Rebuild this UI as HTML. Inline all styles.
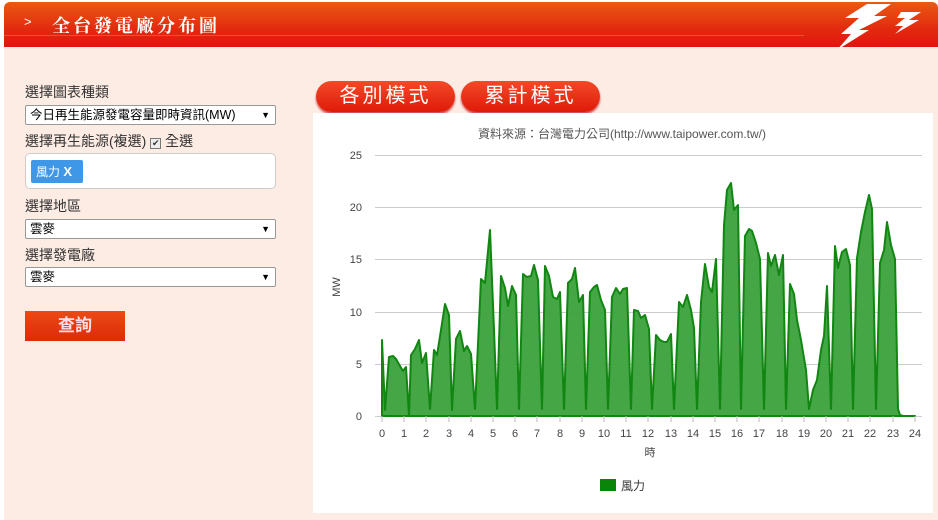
<!DOCTYPE html>
<html><head><meta charset="utf-8"><style>
*{margin:0;padding:0;box-sizing:border-box}
body{width:938px;height:520px;overflow:hidden;background:#fff;font-family:"Liberation Sans","Noto Sans CJK TC",sans-serif;position:relative}
.wrap{position:absolute;left:4px;top:2px;width:934px;height:518px;background:#fdece4;border-radius:6px 6px 0 0;overflow:hidden}
.hdr{position:absolute;left:0;top:0;width:934px;height:45px;background:linear-gradient(#ea5a12,#e32a10 60%,#e0150e);}
.hdr .line{position:absolute;left:0;top:33px;width:800px;height:1px;background:#f07040;opacity:.6}
.hdr .t{position:absolute;left:48px;top:10px;color:#fff;font-size:18px;font-weight:bold;font-family:"Noto Serif CJK SC","Noto Sans CJK TC",serif;letter-spacing:3px}
.hdr .ar{position:absolute;left:20px;top:12px;color:#fff;font-size:13px}
.lab{position:absolute;left:21px;font-size:14px;color:#333}
.sel{position:absolute;left:21px;width:251px;height:20px;background:#fff;border:1px solid #999;border-radius:2px;font-size:12.5px;padding-left:4px;line-height:18px;color:#000}
.sel:after{content:"▼";position:absolute;right:5px;top:0;font-size:9px}
.btn{position:absolute;top:79px;height:31px;border-radius:16px;background:linear-gradient(#f24a28,#e01a08);color:#fff;font-size:20px;letter-spacing:3px;text-align:center;line-height:31px;box-shadow:0 2px 2px #c44}
</style></head><body>
<div class="wrap">
<div class="hdr"><div class="line"></div><span class="ar">&gt;</span><span class="t">全台發電廠分布圖</span>
<svg style="position:absolute;left:825px;top:2px" width="95" height="44"><polygon points="38,0 62,0 45,12 58,12 30,26 40,26 8,46 22,30 12,30 30,14 16,14" fill="#fff"/><polygon points="72,8 92,8 80,16 90,16 66,30 74,22 66,22 76,14 68,14" fill="#fff"/></svg>
</div>
<div class="lab" style="top:80px">選擇圖表種類</div>
<div class="sel" style="top:103px">今日再生能源發電容量即時資訊(MW)</div>
<div class="lab" style="top:129px">選擇再生能源(複選) <span style="display:inline-block;width:11px;height:11px;border:1px solid #777;background:#eee;font-size:9px;line-height:9px;text-align:center;vertical-align:0">✔</span> 全選</div>
<div style="position:absolute;left:21px;top:151px;width:251px;height:36px;background:#fff;border:1px solid #ccc;border-radius:5px"><span style="position:absolute;left:5px;top:6px;height:23px;width:52px;background:#3f97e8;color:#fff;font-size:12px;line-height:24px;padding-left:5px;border-radius:2px">風力 <b style="font-size:13px">X</b></span></div>
<div class="lab" style="top:194px">選擇地區</div>
<div class="sel" style="top:217px">雲麥</div>
<div class="lab" style="top:243px">選擇發電廠</div>
<div class="sel" style="top:265px">雲麥</div>
<div style="position:absolute;left:21px;top:309px;width:100px;height:30px;background:linear-gradient(#ec4a14,#dd2a08);color:#fde;font-size:17px;font-weight:bold;text-align:center;line-height:30px">查詢</div>
<div class="btn" style="left:312px;width:139px">各別模式</div>
<div class="btn" style="left:457px;width:139px">累計模式</div>
<div style="position:absolute;left:309px;top:111px;width:620px;height:400px;background:#fff"></div>
</div>
<svg style="position:absolute;left:0;top:0" width="938" height="520" font-family="Liberation Sans,Noto Sans CJK TC,sans-serif">
<text x="622" y="138" font-size="12" fill="#555" text-anchor="middle">資料來源：台灣電力公司(http://www.taipower.com.tw/)</text>
<g stroke="#ccc" stroke-width="1">
<line x1="375" y1="155.5" x2="922" y2="155.5"/><line x1="375" y1="207.5" x2="922" y2="207.5"/><line x1="375" y1="259.5" x2="922" y2="259.5"/><line x1="375" y1="312.5" x2="922" y2="312.5"/><line x1="375" y1="364.5" x2="922" y2="364.5"/><line x1="375" y1="416.5" x2="922" y2="416.5"/>
</g>
<g font-size="11" fill="#444" text-anchor="end"><text x="362" y="159">25</text><text x="362" y="211">20</text><text x="362" y="263">15</text><text x="362" y="316">10</text><text x="362" y="368">5</text><text x="362" y="420">0</text></g>
<text x="340" y="287" font-size="11" fill="#444" transform="rotate(-90 340 287)" text-anchor="middle">MW</text>
<polygon fill="#3aa13a" fill-opacity=".95" stroke="#128612" stroke-width="2" stroke-linejoin="round" points="382,416 382,340 385,410 389,357 393,356 396,359 400,366 403,371 406,367 409,416 411,355 415,349 419,340 422,363 426,353 430,409 434,350 437,355 441,330 445,304 449,315 452,410 456,339 460,331 464,351 467,346 471,354 475,409 481,279 485,283 490,230 494,330 497,409 501,276 505,288 508,306 512,286 516,295 519,409 523,274 527,277 531,276 534,265 538,280 542,409 545,266 549,276 553,297 557,299 560,292 564,409 568,283 572,279 575,268 579,302 583,295 586,409 590,292 594,287 597,285 601,300 605,310 608,409 612,297 616,288 620,294 623,289 627,288 631,409 634,310 638,311 641,318 645,315 649,329 652,409 656,335 660,340 664,342 667,342 671,334 674,409 679,302 683,307 687,295 691,310 694,328 697,409 701,302 705,264 709,287 712,292 716,259 720,409 724,225 727,190 731,183 734,210 738,205 741,409 745,236 749,229 752,231 756,243 760,259 764,409 768,253 771,266 775,255 779,275 783,255 786,409 790,284 794,294 797,320 801,340 806,370 809,409 813,390 817,380 821,350 824,336 827,286 831,409 835,246 838,268 842,252 846,249 850,265 853,409 857,258 861,232 865,212 869,195 872,209 876,409 880,263 884,250 887,222 891,245 895,259 898,409 900,415 903,416 915,416"/>
<g stroke="#bbb"><line x1="382" y1="416" x2="382" y2="422"/><line x1="404" y1="416" x2="404" y2="422"/><line x1="426" y1="416" x2="426" y2="422"/><line x1="449" y1="416" x2="449" y2="422"/><line x1="471" y1="416" x2="471" y2="422"/><line x1="493" y1="416" x2="493" y2="422"/><line x1="515" y1="416" x2="515" y2="422"/><line x1="537" y1="416" x2="537" y2="422"/><line x1="560" y1="416" x2="560" y2="422"/><line x1="582" y1="416" x2="582" y2="422"/><line x1="604" y1="416" x2="604" y2="422"/><line x1="626" y1="416" x2="626" y2="422"/><line x1="648" y1="416" x2="648" y2="422"/><line x1="671" y1="416" x2="671" y2="422"/><line x1="693" y1="416" x2="693" y2="422"/><line x1="715" y1="416" x2="715" y2="422"/><line x1="737" y1="416" x2="737" y2="422"/><line x1="759" y1="416" x2="759" y2="422"/><line x1="782" y1="416" x2="782" y2="422"/><line x1="804" y1="416" x2="804" y2="422"/><line x1="826" y1="416" x2="826" y2="422"/><line x1="848" y1="416" x2="848" y2="422"/><line x1="870" y1="416" x2="870" y2="422"/><line x1="893" y1="416" x2="893" y2="422"/><line x1="915" y1="416" x2="915" y2="422"/></g>
<g font-size="11" fill="#444" text-anchor="middle"><text x="382" y="437">0</text><text x="404" y="437">1</text><text x="426" y="437">2</text><text x="449" y="437">3</text><text x="471" y="437">4</text><text x="493" y="437">5</text><text x="515" y="437">6</text><text x="537" y="437">7</text><text x="560" y="437">8</text><text x="582" y="437">9</text><text x="604" y="437">10</text><text x="626" y="437">11</text><text x="648" y="437">12</text><text x="671" y="437">13</text><text x="693" y="437">14</text><text x="715" y="437">15</text><text x="737" y="437">16</text><text x="759" y="437">17</text><text x="782" y="437">18</text><text x="804" y="437">19</text><text x="826" y="437">20</text><text x="848" y="437">21</text><text x="870" y="437">22</text><text x="893" y="437">23</text><text x="915" y="437">24</text></g>
<text x="650" y="456" font-size="11" fill="#444" text-anchor="middle">時</text>
<rect x="600" y="479" width="16" height="12" fill="#0a850a"/>
<text x="621" y="490" font-size="12" fill="#333">風力</text>
</svg>
</body></html>
